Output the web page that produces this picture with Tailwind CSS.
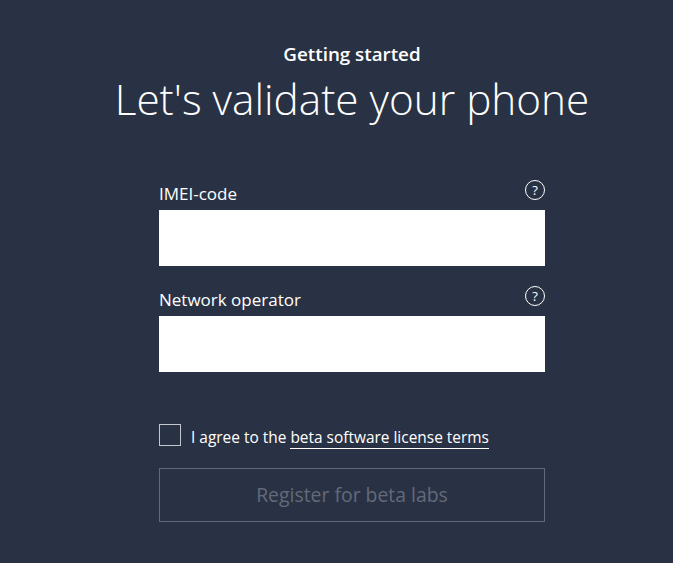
<!DOCTYPE html>
<html>
<head>
<meta charset="utf-8">
<script src="https://cdn.jsdelivr.net/npm/@tailwindcss/browser@4"></script>
</head>
<body class="m-0 w-[673px] h-[563px] overflow-hidden bg-[#293244] text-white font-['Open_Sans','Noto_Sans',sans-serif]">
<main class="flex flex-col items-center pt-[41px] pl-[31px]">
  <p class="text-[18.8px] leading-[26px] font-semibold">Getting started</p>
  <h1 class="mt-[5px] text-[42.3px] leading-[54px] font-light">Let's validate your phone</h1>
  <form class="w-[386px] mt-[56px] flex flex-col">
    <div class="flex justify-between items-end h-[27px]">
      <label class="text-[17px] leading-[24px] mb-[3px]">IMEI-code</label>
      <span class="w-5 h-5 mb-[9px] rounded-full border border-white flex items-center justify-center text-[13px] leading-none">?</span>
    </div>
    <input class="h-14 bg-white mt-[1px] border-0" type="text">
    <div class="flex justify-between items-end h-[27px] mt-[22px]">
      <label class="text-[17px] leading-[24px] mb-[3px]">Network operator</label>
      <span class="w-5 h-5 mb-[9px] rounded-full border border-white flex items-center justify-center text-[13px] leading-none">?</span>
    </div>
    <input class="h-14 bg-white mt-[1px] border-0" type="text">
    <div class="flex items-center mt-[51px] h-[24px]">
      <span class="w-[22px] h-[22px] border border-[#c4c8ce]"></span>
      <span class="ml-[10px] text-[15.45px] leading-[22px] mt-[3px]">I agree to the <a class="border-b border-white">beta software license terms</a></span>
    </div>
    <button type="button" class="mt-[21px] h-[54px] border border-[#626a79] text-[#626a79] text-[19.4px]">Register for beta labs</button>
  </form>
</main>
</body>
</html>
